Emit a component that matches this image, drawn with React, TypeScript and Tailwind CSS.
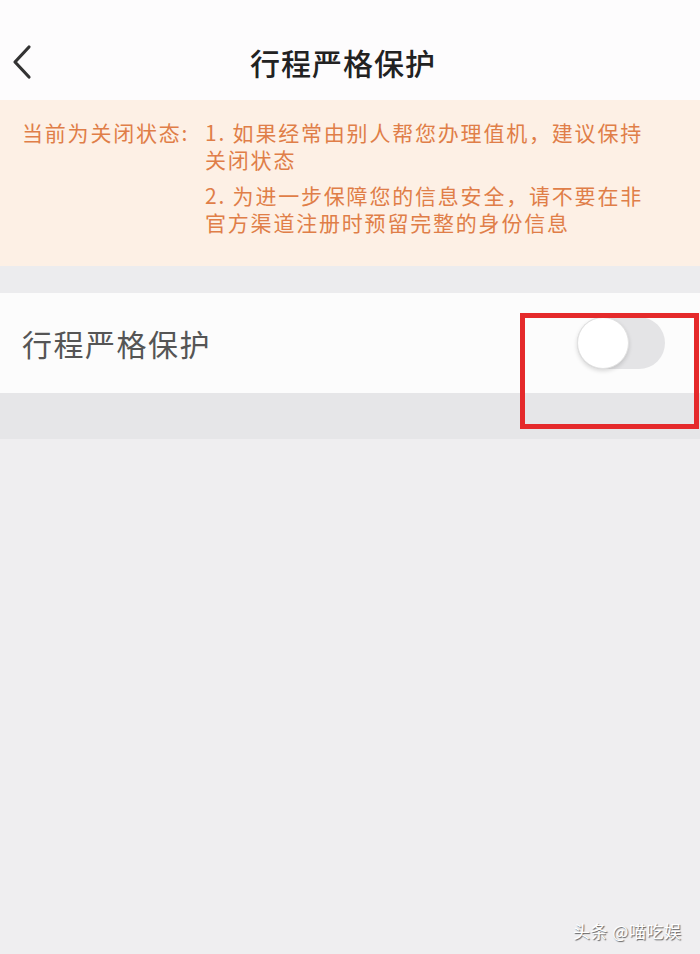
import React from "react";

const cjk = { fontFamily: '"Noto Sans CJK SC", "Noto Sans", sans-serif' };

export default function App() {
  return (
    <div className="relative w-[700px] h-[954px] overflow-hidden bg-[#efeef0]" style={cjk}>
      {/* header */}
      <div className="h-[100px] bg-[#fdfcfd] relative flex items-center justify-center pt-[24px] pr-[14px]">
        <svg className="absolute left-[10px] top-[44px]" width="24" height="36" viewBox="0 0 24 36">
          <path d="M19 3 L5 18 L19 33" fill="none" stroke="#333" strokeWidth="3.2" strokeLinecap="round" strokeLinejoin="round" />
        </svg>
        <div className="text-[30px] leading-none font-medium text-[#222] tracking-[1px]">行程严格保护</div>
      </div>
      {/* banner */}
      <div className="h-[166px] bg-[#fdf0e5] flex pl-[22px] pt-[19px] text-[21px] leading-[27px] text-[#e07e48] tracking-[1.8px]">
        <div className="w-[183px] whitespace-nowrap">当前为关闭状态:</div>
        <div className="flex flex-col gap-[9px]">
          <div className="whitespace-nowrap">
            <div>1. 如果经常由别人帮您办理值机，建议保持</div>
            <div>关闭状态</div>
          </div>
          <div className="whitespace-nowrap">
            <div>2. 为进一步保障您的信息安全，请不要在非</div>
            <div>官方渠道注册时预留完整的身份信息</div>
          </div>
        </div>
      </div>
      <div className="h-[27px] bg-[#ececee]" />
      {/* row */}
      <div className="h-[100px] bg-[#fcfcfc] flex items-center justify-between pl-[22px] pr-[35px]">
        <div className="text-[30px] text-[#555] tracking-[1.5px]">行程严格保护</div>
        <div className="w-[88px] h-[52px] rounded-full bg-[#e4e4e6] relative">
          <div className="absolute left-0 top-0 w-[52px] h-[52px] rounded-full bg-white shadow-[0_2px_4px_rgba(0,0,0,0.15)] border border-[#e2e2e2]" />
        </div>
      </div>
      <div className="h-[46px] bg-[#e6e6e8]" />
      {/* red highlight box */}
      <div className="absolute left-[520px] top-[313px] w-[179px] h-[116px] border-[5px] border-[#e52a2b]" />
      {/* watermark */}
      <div className="absolute left-[573px] top-[918px] text-[17px] text-white tracking-[0.5px] [text-shadow:1px_1px_1px_rgba(0,0,0,0.6)]">
        头条 @喵吃娱
      </div>
    </div>
  );
}
